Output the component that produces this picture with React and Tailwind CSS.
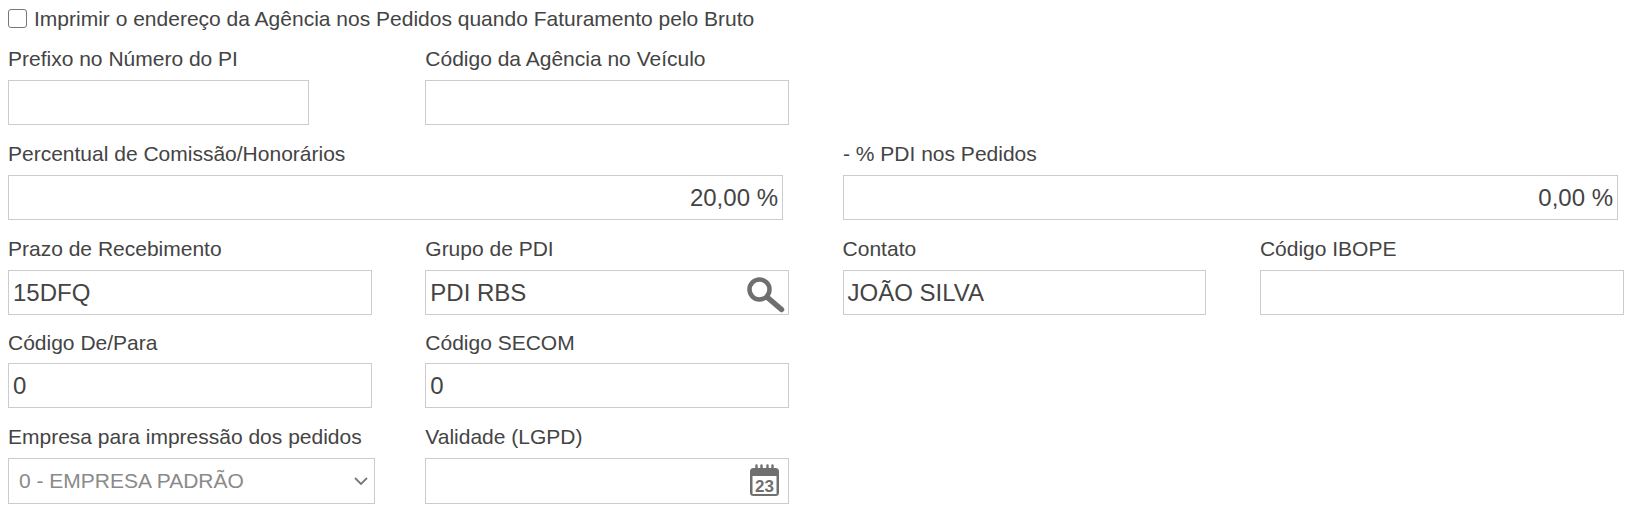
import React from 'react'

const inputBox = 'h-[45px] border border-[#ccc] bg-white flex items-center text-[24px] text-[#444] relative'
const labelText = 'block h-[24px] leading-[24px] text-[21px] text-[#444]'

const Field = ({ label, width, value, right, icon, gap = 'mt-[9px]', className = 'w-[417.3px]' }) => (
  <div className={`shrink-0 ${className}`}>
    <label className={labelText}>{label}</label>
    <div className={`${inputBox} ${gap} ${width} ${right ? 'justify-end pr-[4px]' : 'pl-[4px]'}`}>
      <span>{value}</span>
      {icon}
    </div>
  </div>
)

const SearchIcon = () => (
  <svg className="absolute right-0 top-0" width="42" height="42" viewBox="0 0 42 42" fill="none" stroke="#6f6f6f">
    <circle cx="13.5" cy="18.5" r="10" strokeWidth="4.5" />
    <path d="M21.5 26.5 L35.5 38.5" strokeWidth="5.5" strokeLinecap="round" />
  </svg>
)

const CalendarIcon = () => (
  <svg className="absolute right-[8px] top-[5px]" width="31" height="33" viewBox="0 0 31 33" fill="none">
    <rect x="1" y="4" width="29" height="28" rx="3.5" fill="#6f6f6f" />
    <rect x="3.5" y="12" width="24" height="18" fill="#fff" />
    <path d="M7.5 1.5v6M12.5 1.5v6M18.5 1.5v6M23.5 1.5v6" stroke="#6f6f6f" strokeWidth="2.4" strokeLinecap="round" />
    <text x="15.5" y="28" textAnchor="middle" fontFamily="Liberation Sans" fontWeight="700" fontSize="17" fill="#6f6f6f">23</text>
  </svg>
)

const App = () => {
  return (
    <div className="w-[1630px] h-[513px] bg-white pl-[8px] pt-[6px] font-['Liberation_Sans',Arial,sans-serif] overflow-hidden">
      <div className="flex items-center h-[25px]">
        <input type="checkbox" className="w-[19px] h-[19px] m-0 appearance-none border border-[#767676] rounded-[3px] bg-white" />
        <span className="ml-[7px] text-[21px] text-[#444]">Imprimir o endereço da Agência nos Pedidos quando Faturamento pelo Bruto</span>
      </div>

      <div className="flex mt-[16px]">
        <Field label="Prefixo no Número do PI" width="w-[301px]" />
        <Field label="Código da Agência no Veículo" width="w-[364px]" />
      </div>

      <div className="flex mt-[17px]">
        <Field label="Percentual de Comissão/Honorários" width="w-[775px]" value="20,00 %" right className="w-[835px]" />
        <Field label="- % PDI nos Pedidos" width="w-[775px]" value="0,00 %" right className="w-[780px]" />
      </div>

      <div className="flex mt-[17px]">
        <Field label="Prazo de Recebimento" width="w-[364px]" value="15DFQ" />
        <Field label="Grupo de PDI" width="w-[364px]" value="PDI RBS" icon={<SearchIcon />} />
        <Field label="Contato" width="w-[363px]" value="JOÃO SILVA" />
        <Field label="Código IBOPE" width="w-[364px]" />
      </div>

      <div className="flex mt-[16px]">
        <Field label="Código De/Para" width="w-[364px]" value="0" gap="mt-[8px]" />
        <Field label="Código SECOM" width="w-[364px]" value="0" gap="mt-[8px]" />
      </div>

      <div className="flex mt-[17px]">
        <div className="w-[417.3px] shrink-0">
          <label className={labelText}>Empresa para impressão dos pedidos</label>
          <div className="mt-[9px] w-[367px] h-[46px] border border-[#ccc] bg-white flex items-center justify-between pl-[10px] pr-[5px] text-[21px] text-[#8a8a8a]">
            <span>0 - EMPRESA PADRÃO</span>
            <svg width="16" height="16" viewBox="0 0 16 16" fill="none" stroke="#777" strokeWidth="1.8"><path d="M2 5l6 6 6-6" /></svg>
          </div>
        </div>
        <Field label="Validade (LGPD)" width="w-[364px] !h-[46px]" icon={<CalendarIcon />} />
      </div>
    </div>
  )
}

export default App
